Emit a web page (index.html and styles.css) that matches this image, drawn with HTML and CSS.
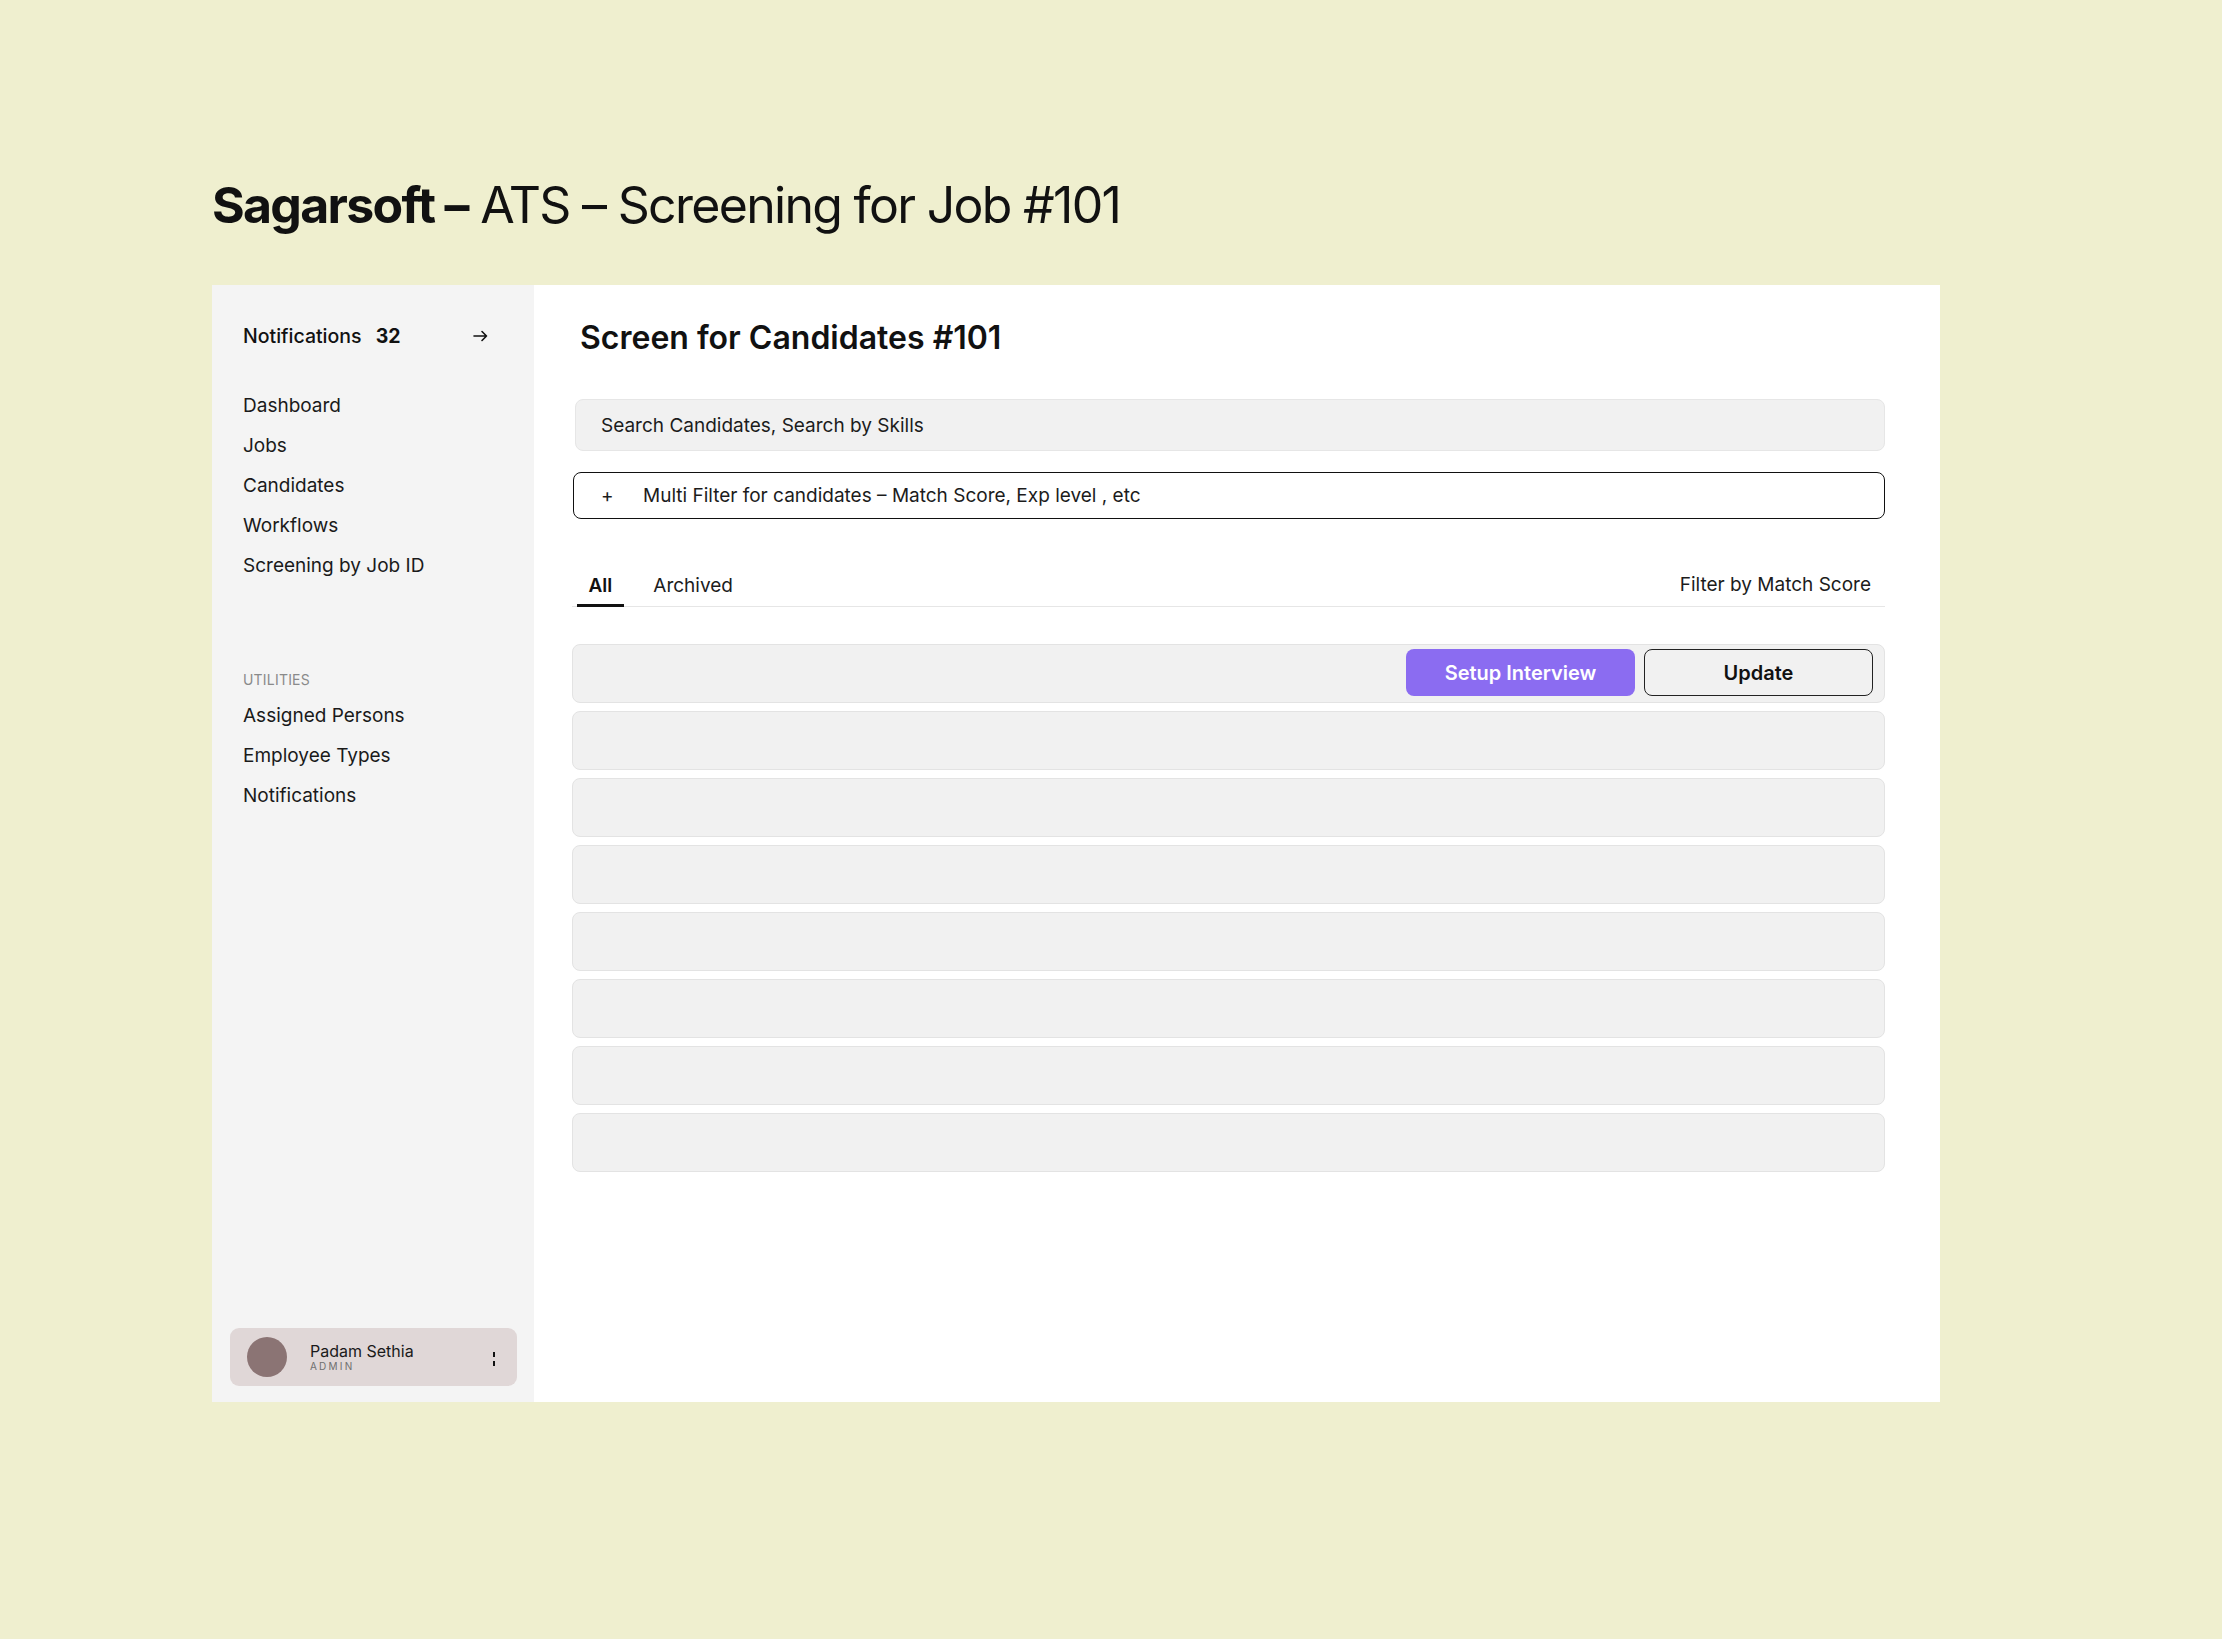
FILE: index.html
```html
<!DOCTYPE html>
<html lang="en">
<head>
<meta charset="utf-8">
<title>Sagarsoft – ATS – Screening for Job #101</title>
<link rel="stylesheet" href="styles.css">
</head>
<body>
<div class="page">
  <h1 class="page-title"><b>Sagarsoft –</b> ATS – Screening for Job #101</h1>
  <div class="panel">
    <aside class="sidebar">
      <div class="side-top">
        <div class="notif-row">
          <span class="notif-label">Notifications <b class="notif-count">32</b></span>
          <svg class="arrow" width="15" height="12" viewBox="0 0 15 12" fill="none" stroke="#111" stroke-width="1.6" stroke-linecap="round" stroke-linejoin="round"><path d="M1 6h12.5M9 1.5 13.5 6 9 10.5"/></svg>
        </div>
        <nav class="nav">
          <a class="nav-item">Dashboard</a>
          <a class="nav-item">Jobs</a>
          <a class="nav-item">Candidates</a>
          <a class="nav-item">Workflows</a>
          <a class="nav-item">Screening by Job ID</a>
        </nav>
        <div class="section-label">UTILITIES</div>
        <nav class="nav">
          <a class="nav-item">Assigned Persons</a>
          <a class="nav-item">Employee Types</a>
          <a class="nav-item">Notifications</a>
        </nav>
      </div>
      <div class="user-card">
        <div class="avatar"></div>
        <div class="user-info">
          <div class="user-name">Padam Sethia</div>
          <div class="user-role">ADMIN</div>
        </div>
        <div class="more"><i></i><i></i></div>
      </div>
    </aside>
    <main class="main">
      <h2 class="main-title">Screen for Candidates #101</h2>
      <div class="search">Search Candidates, Search by Skills</div>
      <div class="filter"><span class="plus">+</span>Multi Filter for candidates – Match Score, Exp level , etc</div>
      <div class="tabs">
        <span class="tab active">All</span>
        <span class="tab">Archived</span>
        <span class="tab-right">Filter by Match Score</span>
      </div>
      <div class="rows">
        <div class="row">
          <button class="btn btn-primary">Setup Interview</button>
          <button class="btn btn-outline">Update</button>
        </div>
        <div class="row"></div>
        <div class="row"></div>
        <div class="row"></div>
        <div class="row"></div>
        <div class="row"></div>
        <div class="row"></div>
        <div class="row"></div>
      </div>
    </main>
  </div>
</div>
</body>
</html>
```
FILE: styles.css
```css
* { box-sizing: border-box; }
html, body { margin: 0; padding: 0; }
body {
  background: #efefcf;
  font-family: Inter, "Noto Sans", sans-serif;
  color: #111;
  width: 2222px;
  height: 1639px;
  overflow: hidden;
}
.page {
  padding: 175px 0 0 212px;
}
.page-title {
  margin: 0 0 50px 0;
  font-size: 50px;
  line-height: 60px;
  font-weight: 400;
  letter-spacing: -1.7px;
  color: #111;
}
.page-title b { font-weight: 700; }
.panel {
  display: flex;
  width: 1728px;
  height: 1117px;
  background: #fff;
}
.sidebar {
  width: 322px;
  flex: none;
  background: #f4f4f4;
  display: flex;
  flex-direction: column;
  justify-content: space-between;
  padding: 39px 17px 16px 18px;
}
.side-top { padding-left: 13px; }
.notif-row {
  display: flex;
  align-items: center;
  justify-content: space-between;
  padding-right: 29px;
  font-size: 19.5px;
  line-height: 24px;
  font-weight: 500;
  margin-bottom: 38px;
}
.notif-count { font-weight: 700; margin-left: 9px; }
.nav { display: flex; flex-direction: column; }
.nav-item {
  font-size: 19px;
  line-height: 40px;
  height: 40px;
  color: #1a1a1a;
}
.section-label {
  margin-top: 85px;
  margin-bottom: 7px;
  font-size: 14px;
  line-height: 18px;
  color: #8a8a8a;
  letter-spacing: 0.2px;
}
.user-card {
  height: 58px;
  border-radius: 9px;
  background: #e0d7d7;
  display: flex;
  align-items: center;
  padding: 0 22px 0 17px;
}
.avatar {
  width: 40px;
  height: 40px;
  border-radius: 50%;
  background: #8b7474;
  flex: none;
}
.user-info { margin-left: 23px; flex: 1; }
.user-name { font-size: 16px; line-height: 18px; color: #1a1a1a; }
.user-role { font-size: 10px; line-height: 12px; letter-spacing: 2.2px; color: #6f6f6f; }
.more { display: flex; flex-direction: column; gap: 4px; margin-top: 4px; }
.more i { display: block; width: 2px; height: 5px; background: #111; }

.main {
  flex: 1;
  padding: 35px 55px 0 38px;
}
.main-title {
  margin: 0 0 43px 8px;
  font-size: 32px;
  line-height: 36px;
  font-weight: 600;
  letter-spacing: 0;
}
.search {
  margin-left: 3px;
  height: 52px;
  background: #f1f1f1;
  border: 1px solid #e6e6e6;
  border-radius: 8px;
  padding-left: 25px;
  display: flex;
  align-items: center;
  font-size: 19px;
  color: #1c1c1c;
}
.filter {
  margin: 21px 0 0 1px;
  height: 47px;
  border: 1.5px solid #111;
  border-radius: 8px;
  padding-left: 27px;
  display: flex;
  align-items: center;
  font-size: 19px;
  color: #1c1c1c;
}
.plus { display: inline-block; width: 42px; font-size: 19px; }
.tabs {
  margin-top: 54px;
  display: flex;
  align-items: flex-end;
  gap: 18px;
  padding: 0 14px 0 5px;
  border-bottom: 1px solid #e6e6e6;
  font-size: 19px;
  line-height: 24px;
}
.tab {
  padding: 0 11.5px 6px;
  margin-bottom: -1px;
  border-bottom: 3px solid transparent;
  color: #1c1c1c;
}
.tab.active { border-bottom-color: #111; font-weight: 600; color: #111; }
.tab-right { margin-left: auto; padding-bottom: 9px; color: #1c1c1c; }
.rows {
  margin-top: 37px;
  display: flex;
  flex-direction: column;
  gap: 8px;
}
.row {
  height: 59px;
  background: #f1f1f1;
  border: 1px solid #e3e3e3;
  border-radius: 8px;
  display: flex;
  align-items: center;
  justify-content: flex-end;
  gap: 9px;
  padding-right: 11px;
}
.btn {
  width: 229px;
  height: 47px;
  border-radius: 8px;
  font-family: Inter, "Noto Sans", sans-serif;
  font-size: 20px;
  font-weight: 600;
  cursor: pointer;
  margin-top: -2px;
}
.btn-primary {
  background: #8b6cf1;
  color: #fff;
  border: none;
}
.btn-outline {
  background: transparent;
  color: #111;
  border: 1.3px solid #222;
}
```
